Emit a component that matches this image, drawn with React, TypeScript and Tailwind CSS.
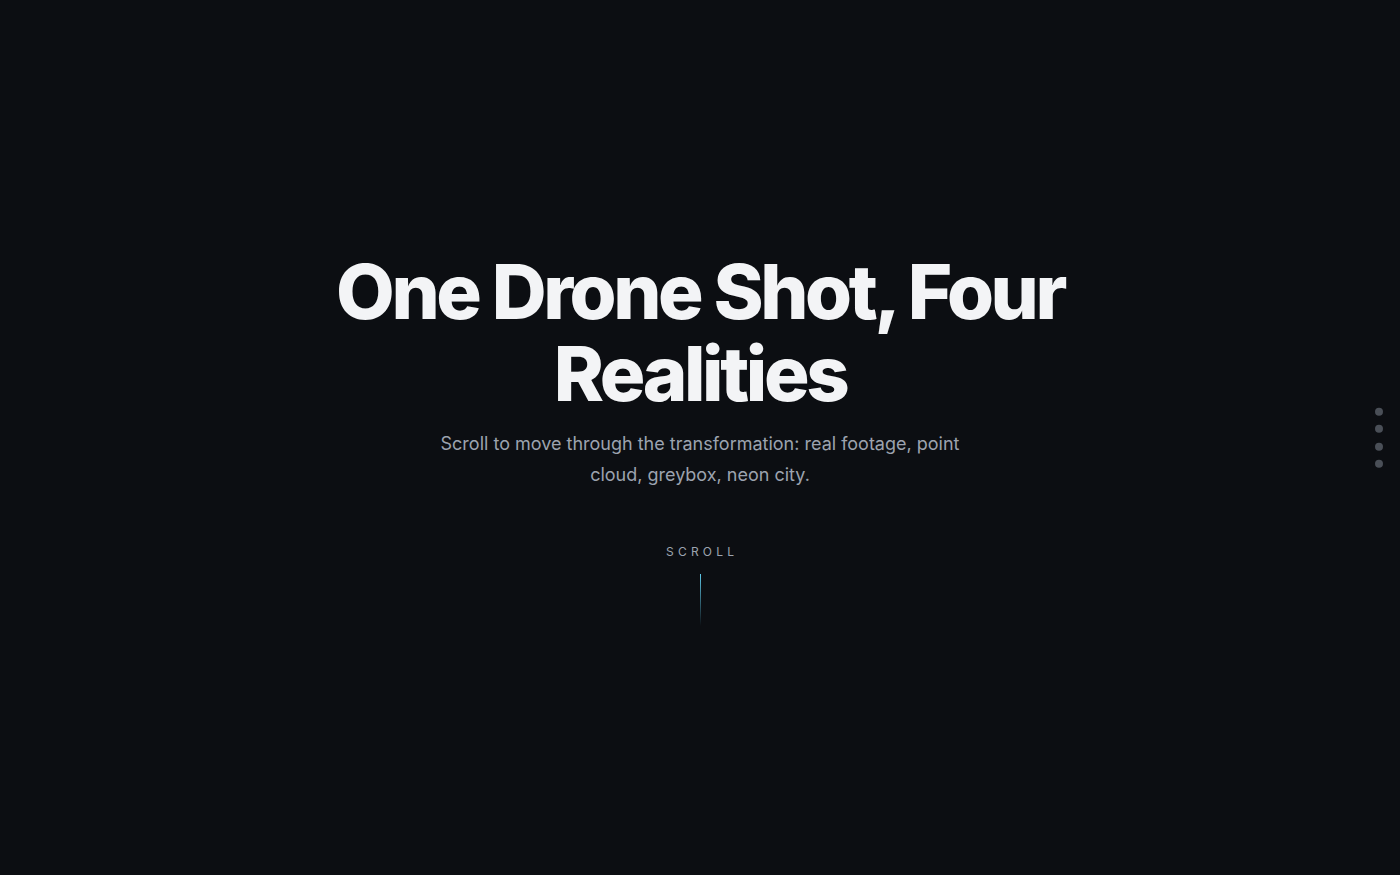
export default function App() {
  return (
    <div className="relative h-[875px] w-full overflow-hidden bg-[#0c0e12]" style={{ fontFamily: 'Inter, "Noto Sans", sans-serif' }}>
      <div className="flex h-full flex-col items-center justify-center text-center">
        <h1 className="max-w-[900px] text-[76px] font-extrabold leading-[82px] tracking-[-0.045em] text-[#f3f4f6]">
          One Drone Shot, Four
          <br />
          Realities
        </h1>
        <p className="mt-[14px] max-w-[540px] text-[18px] leading-[31px] text-[#9ca3af]">
          Scroll to move through the transformation: real footage, point cloud, greybox, neon city.
        </p>
        <div className="mt-[54px] pl-[0.35em] text-[12px] leading-4 tracking-[0.35em] text-[#9ca3af]">SCROLL</div>
        <div className="mt-[14px] h-[52px] w-px bg-gradient-to-b from-[#5ec8e8] to-transparent" />
      </div>
      <div className="absolute right-[17px] top-1/2 flex -translate-y-1/2 flex-col gap-[9.5px]">
        <span className="block h-2 w-2 rounded-full bg-[#4a4f57]" />
        <span className="block h-2 w-2 rounded-full bg-[#4a4f57]" />
        <span className="block h-2 w-2 rounded-full bg-[#4a4f57]" />
        <span className="block h-2 w-2 rounded-full bg-[#4a4f57]" />
      </div>
    </div>
  );
}
